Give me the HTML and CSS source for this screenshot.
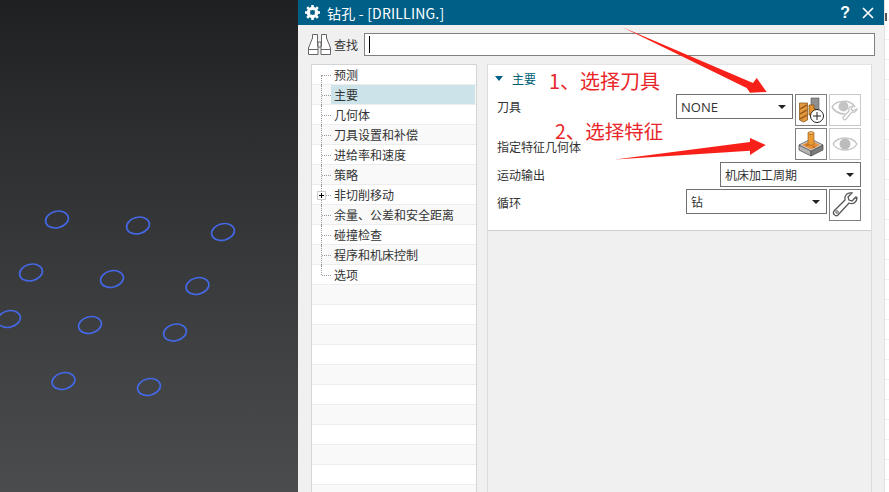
FILE: index.html
```html
<!DOCTYPE html>
<html lang="zh-CN">
<head>
  <meta charset="UTF-8" />
  <title>钻孔 - [DRILLING.]</title>
  <link rel="stylesheet" href="styles.css">
</head>
<body>
  <div class="viewport">
    <svg class="holes" width="298" height="492" viewBox="0 0 298 492">
      <g fill="none" stroke="#4568e6" stroke-width="1.6">
        <ellipse cx="57" cy="219.5" rx="11.6" ry="8.2" transform="rotate(-14 57 219.5)"/>
        <ellipse cx="138" cy="225.5" rx="11.6" ry="8.2" transform="rotate(-14 138 225.5)"/>
        <ellipse cx="223" cy="232" rx="11.6" ry="8.2" transform="rotate(-14 223 232)"/>
        <ellipse cx="31" cy="272.5" rx="11.6" ry="8.2" transform="rotate(-14 31 272.5)"/>
        <ellipse cx="112" cy="279" rx="11.6" ry="8.2" transform="rotate(-14 112 279)"/>
        <ellipse cx="197.500" cy="286" rx="11.6" ry="8.2" transform="rotate(-14 197.500 286)"/>
        <ellipse cx="9" cy="319" rx="11.6" ry="8.2" transform="rotate(-14 9 319)"/>
        <ellipse cx="90" cy="325" rx="11.6" ry="8.2" transform="rotate(-14 90 325)"/>
        <ellipse cx="175" cy="332.500" rx="11.6" ry="8.2" transform="rotate(-14 175 332.500)"/>
        <ellipse cx="63.500" cy="381" rx="11.6" ry="8.2" transform="rotate(-14 63.500 381)"/>
        <ellipse cx="149" cy="387" rx="11.6" ry="8.2" transform="rotate(-14 149 387)"/>
      </g>
    </svg>
  </div>

  <div class="dialog">
    <div class="titlebar">
      <svg class="gear" width="15" height="15" viewBox="0 0 14 14">
        <circle cx="7" cy="7" r="4" fill="none" stroke="#fff" stroke-width="2.8"/>
        <g stroke="#fff" stroke-width="2.4">
          <line x1="7" y1="0" x2="7" y2="14"/>
          <line x1="0" y1="7" x2="14" y2="7"/>
          <line x1="2" y1="2" x2="4" y2="4"/>
          <line x1="10" y1="10" x2="12" y2="12"/>
          <line x1="12" y1="2" x2="10" y2="4"/>
          <line x1="4" y1="10" x2="2" y2="12"/>
        </g>
        <circle cx="7" cy="7" r="2.300" fill="#005f87"/>
      </svg>
      <span class="title">钻孔 - [DRILLING.]</span>
      <span class="help">?</span>
      <svg class="close" width="12" height="12" viewBox="0 0 12 12">
        <path d="M1 1L11 11M11 1L1 11" stroke="#fff" stroke-width="1.700" fill="none"/>
      </svg>
    </div>

    <div class="search">
      <svg class="binoculars" width="25" height="23" viewBox="0 0 25 23">
        <g fill="#fff" stroke="#666" stroke-width="1">
          <path d="M5.500 1.500h5v12h-5z"/>
          <path d="M14.500 1.500h5v12h-5z"/>
          <path d="M5.500 5L1.500 15v6.500h9.500V13h-0.500"/>
          <path d="M19.500 5l4 10v6.500H14V13h0.500"/>
          <path d="M1.500 16.500h9.500M14 16.500h9.500M11 9h3v5h-3z"/>
        </g>
      </svg>
      <span class="search-label">查找</span>
      <div class="search-box"><span class="caret"></span></div>
    </div>

    <div class="content">
      <div class="tree">
        <div class="tree-row first"><span class="guide"></span><span class="tree-text">预测</span></div>
        <div class="tree-row alt selected"><span class="guide"></span><span class="tree-text">主要</span></div>
        <div class="tree-row"><span class="guide"></span><span class="tree-text">几何体</span></div>
        <div class="tree-row alt"><span class="guide"></span><span class="tree-text">刀具设置和补偿</span></div>
        <div class="tree-row"><span class="guide"></span><span class="tree-text">进给率和速度</span></div>
        <div class="tree-row alt"><span class="guide"></span><span class="tree-text">策略</span></div>
        <div class="tree-row"><span class="guide"><span class="expander"></span></span><span class="tree-text">非切削移动</span></div>
        <div class="tree-row alt"><span class="guide"></span><span class="tree-text">余量、公差和安全距离</span></div>
        <div class="tree-row"><span class="guide"></span><span class="tree-text">碰撞检查</span></div>
        <div class="tree-row alt"><span class="guide"></span><span class="tree-text">程序和机床控制</span></div>
        <div class="tree-row last"><span class="guide"></span><span class="tree-text">选项</span></div>
        <div class="tree-row alt"></div>
        <div class="tree-row"></div>
        <div class="tree-row alt"></div>
        <div class="tree-row"></div>
        <div class="tree-row alt"></div>
        <div class="tree-row"></div>
        <div class="tree-row alt"></div>
        <div class="tree-row"></div>
        <div class="tree-row alt"></div>
        <div class="tree-row"></div>
        <div class="tree-row alt"></div>
      </div>

      <div class="panel">
        <div class="group">
          <div class="group-head"><span class="triangle"></span><span class="group-title">主要</span></div>

          <div class="row row-tall">
            <span class="label">刀具</span>
            <div class="controls">
              <div class="select select-tool"><span class="latin">NONE</span><span class="arrow"></span></div>
              <div class="icon-btn">
                <svg width="28" height="28" viewBox="0 0 28 28">
                  <path d="M14 2h8v14h-8z" fill="#8f8f8f" stroke="#555" stroke-width="0.600"/>
                  <path d="M2.500 7h8v17l-4 2-4-2z" fill="#e8983c" stroke="#7a4a12" stroke-width="0.700"/>
                  <path d="M3 13l7-4M3 18l7-4M3 23l7-4" stroke="#9a6220" stroke-width="1.500"/>
                  <path d="M12 9h5v4h2v6h-7z" fill="#e8952f" stroke="#7a4a12" stroke-width="0.700"/>
                  <circle cx="20" cy="20" r="6.500" fill="#fff" stroke="#222" stroke-width="1"/>
                  <path d="M20 16v8M16 20h8" stroke="#222" stroke-width="1"/>
                </svg>
              </div>
              <div class="icon-btn disabled">
                <svg width="28" height="28" viewBox="0 0 28 28">
                  <path d="M1 11C5 4 19 3 24 11" fill="none" stroke="#c4c4c4" stroke-width="1.500"/>
                  <path d="M1 11C4 16 9 18 14 18" fill="none" stroke="#c4c4c4" stroke-width="1.500"/>
                  <circle cx="12.500" cy="10.500" r="5" fill="#c4c4c4"/>
                  <path d="M26 13c-1 3-3 4-5 3l-6 7c-1 2-4 0-3-2l6-6c-1-3 1-5 4-5l-2 3 2 2z" fill="#fff" stroke="#c4c4c4" stroke-width="1.200"/>
                </svg>
              </div>
            </div>
          </div>

          <div class="row row-tall feature-row">
            <span class="label">指定特征几何体</span>
            <div class="controls">
              <div class="icon-btn">
                <svg width="28" height="28" viewBox="0 0 28 28">
                  <path d="M2 15v5l12 6V20z" fill="#b4b4b4" stroke="#444" stroke-width="0.700"/>
                  <path d="M26 15v5l-12 6V20z" fill="#7c7c7c" stroke="#444" stroke-width="0.700"/>
                  <path d="M2 15L14 9l12 6-12 6z" fill="#cfcfcf" stroke="#444" stroke-width="0.700"/>
                  <path d="M5 15l9-4.500 9 4.500-9 4.500z" fill="#e8913a"/>
                  <path d="M8 15l2-1 2 1-2 1zM15 17l2-1 2 1-2 1z" fill="#b96a1e"/>
                  <path d="M11 3v11c0 1.600 6 1.600 6 0V3z" fill="#ec9a34" stroke="#8a5518" stroke-width="0.600"/>
                  <ellipse cx="14" cy="3" rx="3" ry="1.500" fill="#f5b766" stroke="#8a5518" stroke-width="0.600"/>
                </svg>
              </div>
              <div class="icon-btn disabled">
                <svg width="28" height="28" viewBox="0 0 28 28">
                  <path d="M2 14C7 6 21 6 26 14C21 22 7 22 2 14Z" fill="#fff" stroke="#c4c4c4" stroke-width="1.300"/>
                  <circle cx="14" cy="14" r="5.500" fill="#bcbcbc"/>
                </svg>
              </div>
            </div>
          </div>

          <div class="row row-short">
            <span class="label">运动输出</span>
            <div class="controls">
              <div class="select select-wide"><span class="value">机床加工周期</span><span class="arrow"></span></div>
            </div>
          </div>

          <div class="row row-cycle">
            <span class="label cycle-label">循环</span>
            <div class="controls">
              <div class="select select-wide"><span class="value">钻</span><span class="arrow"></span></div>
              <div class="icon-btn">
                <svg width="28" height="28" viewBox="0 0 28 28">
                  <path d="M26 7c0 4-4 7-8 5L7 24c-2 2-6-1-4-4L14 9c-1-4 2-8 7-7l-4 4 1 3 3 1 4-4c0.600 0 0 0 0 1z" fill="#fff" stroke="#555" stroke-width="1.300"/>
                  <circle cx="6" cy="21" r="1.300" fill="none" stroke="#555" stroke-width="0.900"/>
                </svg>
              </div>
            </div>
          </div>
        </div>
      </div>
    </div>
  </div>

  <div class="edge">
    <span class="edge-top"></span>
  </div>

  <!-- red notes drawn on top of the screenshot -->
  <svg class="marks" width="889" height="492" viewBox="0 0 889 492">
    <path d="M622 27L753 83L756.700 78L766.700 92L750 92.700L746.700 88Z" fill="#f8211a"/>
    <path d="M615 159.500L750 142L750 138L765.700 145L750 155L750 150.700Z" fill="#f8211a"/>
  </svg>
  <span class="note note-one">1、选择刀具</span>
  <span class="note note-two">2、选择特征</span>
</body>
</html>
```

FILE: styles.css
```css
* {
  box-sizing: border-box;
}
html,
body {
  margin: 0;
  height: 492px;
  overflow: hidden;
}
body {
  display: flex;
  position: relative;
  width: 889px;
  font-family: "Noto Sans CJK SC", "Noto Sans", sans-serif;
  font-size: 12px;
  color: #333;
  background-color: #fff;
}
.viewport {
  width: 298px;
  flex-shrink: 0;
  background: linear-gradient(to bottom, #1f2021 0%, #2c2d2f 25%, #3b3c3e 60%, #4b4c4e 100%);
}
.holes {
  display: block;
}
.dialog {
  width: 587px;
  flex-shrink: 0;
  display: flex;
  flex-direction: column;
  background-color: #f0f0f0;
  border-right: 1px solid #e2e2e2;
}
.titlebar {
  height: 25px;
  display: flex;
  align-items: center;
  padding: 0 10px 0 7px;
  background-color: #005f87;
  color: #fff;
}
.gear {
  flex-shrink: 0;
}
.title {
  margin-left: 7px;
  font-size: 14px;
  letter-spacing: 0.2px;
  flex: 1;
}
.help {
  font-family: "Liberation Sans", sans-serif;
  font-size: 16px;
  font-weight: bold;
  margin-right: 12px;
}
.close {
  flex-shrink: 0;
}
.search {
  height: 39px;
  display: flex;
  align-items: center;
  padding: 0 9px 1px 9px;
}
.binoculars {
  flex-shrink: 0;
}
.search-label {
  margin-left: 2px;
  width: 30px;
  color: #333;
}
.search-box {
  width: 512px;
  height: 23px;
  background-color: #fff;
  border: 1px solid #808080;
  display: flex;
  align-items: center;
  padding-left: 4px;
}
.caret {
  width: 1px;
  height: 17px;
  background-color: #000;
}
.content {
  flex: 1;
  display: flex;
  min-height: 0;
  padding-left: 13px;
}
.tree {
  width: 166px;
  flex-shrink: 0;
  background-color: #fff;
  border: 1px solid #d4d4d4;
  border-bottom: none;
  overflow: hidden;
}
.tree-row {
  height: 20px;
  display: flex;
  align-items: stretch;
  border-bottom: 1px solid #ededed;
  background-color: #fff;
}
.tree-row.alt {
  background-color: #f9f9f9;
}
.guide {
  position: relative;
  width: 10px;
  margin-left: 9px;
  flex-shrink: 0;
  margin-bottom: -1px;
  border-left: 1px dotted #999;
}
.guide::after {
  content: "";
  position: absolute;
  left: 0;
  top: 10px;
  width: 9px;
  border-top: 1px dotted #999;
}
.tree-row.first .guide {
  margin-top: 10px;
  margin-bottom: -1px;
}
.tree-row.first .guide::after {
  top: 0;
}
.tree-row.last .guide {
  margin-bottom: 9px;
}
.expander {
  position: absolute;
  left: -5px;
  top: 6px;
  width: 9px;
  height: 9px;
  background-color: #fff;
  border: 1px solid #ccc;
  z-index: 1;
}
.expander::before,
.expander::after {
  content: "";
  position: absolute;
  background-color: #000;
}
.expander::before {
  left: 1px;
  top: 3px;
  width: 5px;
  height: 1px;
}
.expander::after {
  left: 3px;
  top: 1px;
  width: 1px;
  height: 5px;
}
.tree-text {
  flex: 1;
  padding-left: 3px;
  line-height: 20px;
  white-space: nowrap;
}
.tree-row.selected .tree-text {
  background-color: #cde3ea;
  margin-right: 1px;
}
.panel {
  width: 385px;
  margin-left: 10px;
  flex-shrink: 0;
  border-left: 1px solid #dcdcdc;
  border-right: 1px solid #dcdcdc;
  border-top: 1px solid #e4e4e4;
}
.group {
  height: 166px;
  background-color: #fff;
  border-bottom: 1px solid #d0d0d0;
  padding: 0 10px 0 9px;
}
.group-head {
  height: 29px;
  display: flex;
  align-items: center;
  padding-bottom: 3px;
}
.triangle {
  width: 0;
  height: 0;
  margin-left: -2px;
  border-left: 4px solid transparent;
  border-right: 4px solid transparent;
  border-top: 5px solid #005f87;
}
.group-title {
  margin-left: 9px;
  color: #005f73;
  font-size: 12px;
}
.row {
  display: flex;
  justify-content: space-between;
}
.row-tall {
  height: 34px;
}
.row-short {
  height: 27px;
}
.row-cycle {
  height: 32px;
}
.label {
  line-height: 26px;
  white-space: nowrap;
}
.feature-row .label {
  line-height: 38px;
}
.cycle-label {
  line-height: 28px;
}
.controls {
  display: flex;
  gap: 2px;
  align-items: flex-start;
}
.select {
  height: 25px;
  background-color: #fff;
  border: 1px solid #707070;
  display: flex;
  align-items: center;
  justify-content: space-between;
  padding: 0 6px 0 4px;
}
.select-tool {
  width: 117px;
}
.select-wide {
  width: 141px;
}
.latin {
  font-family: "Open Sans", sans-serif;
  font-size: 13px;
}
.value {
  font-size: 12px;
}
.arrow {
  width: 0;
  height: 0;
  border-left: 4px solid transparent;
  border-right: 4px solid transparent;
  border-top: 4px solid #222;
}
.icon-btn {
  width: 32px;
  height: 32px;
  display: flex;
  align-items: center;
  justify-content: center;
  background-color: #fff;
  border: 1px solid #808080;
}
.icon-btn.disabled {
  border-color: #c8c8c8;
}
.edge {
  flex: 1;
  background: repeating-linear-gradient(to bottom, #fff 0, #fff 19px, #f0f0f0 19px, #f0f0f0 20px);
}
.edge-top {
  display: block;
  width: 2px;
  height: 8px;
  margin-top: 13px;
  background-color: #555;
}
/* annotations */
.marks {
  position: absolute;
  left: 0;
  top: 0;
  pointer-events: none;
}
.note {
  position: absolute;
  color: #e8262a;
  line-height: 20px;
  white-space: nowrap;
}
.note-one {
  left: 549px;
  top: 71px;
  font-size: 20px;
}
.note-two {
  left: 555px;
  top: 121px;
  font-size: 19.5px;
}
```
